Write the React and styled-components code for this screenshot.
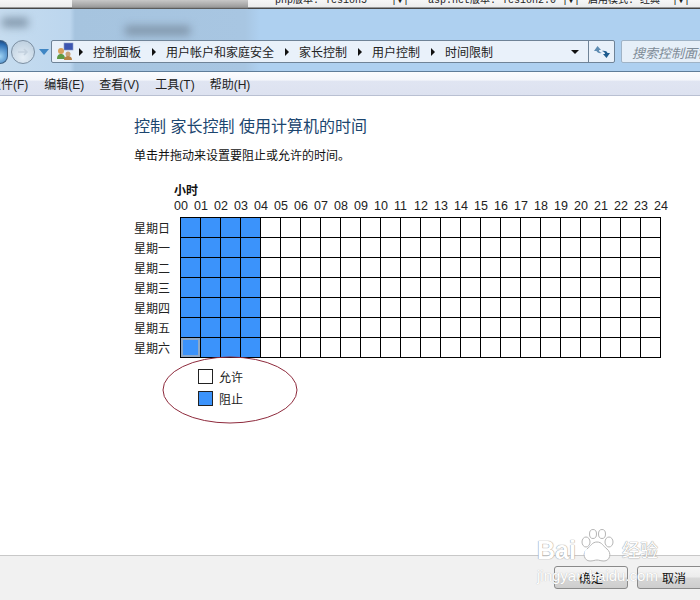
import React from 'react';
import styled, { createGlobalStyle } from 'styled-components';

const GlobalStyle = createGlobalStyle`
  html, body { margin: 0; padding: 0; background: #fff; }
  body {
    width: 700px;
    height: 600px;
    overflow: hidden;
    font-family: "Liberation Sans", "Noto Sans CJK SC", sans-serif;
    font-size: 12px;
    color: #111;
  }
`;

const Page = styled.div`
  position: relative;
  width: 700px;
  height: 600px;
  display: flex;
  flex-direction: column;
  overflow: hidden;
`;

const TaskStrip = styled.div`
  height: 9px;
  flex: none;
  display: flex;
  background: linear-gradient(#f6f6f6, #ececec 75%, #555 90%, #333);
  overflow: hidden;
`;

const TaskDim = styled.div`
  margin-left: 72px;
  width: 176px;
  flex: none;
  background: linear-gradient(#c8c8c8, #9a9a9a 80%, #444);
`;

const TaskText = styled.div`
  margin-left: ${p => p.$gap}px;
  width: ${p => p.$w}px;
  flex: none;
  font-family: "Liberation Mono", "Noto Sans CJK SC", monospace;
  font-size: 10px;
  line-height: 12px;
  margin-top: -5px;
  white-space: pre;
  color: #222;
`;

const Chrome = styled.div`
  height: 63px;
  flex: none;
  position: relative;
  display: flex;
  flex-direction: column;
  justify-content: flex-end;
  padding-bottom: 8px;
  box-sizing: border-box;
  border-bottom: 1px solid #5f7d99;
  background: linear-gradient(90deg, #c6dcef 0, #bcd6ee 70px, #a6c4df 75px, #a8c6e2 245px, #aed0f0 260px, #aed0f0 100%);
  overflow: hidden;
`;

const BlurTitle = styled.div`
  position: absolute;
  left: ${p => p.$left}px;
  top: ${p => p.$top}px;
  width: ${p => p.$w}px;
  height: 9px;
  background: #7f94a8;
  filter: blur(4px);
`;

const NavRow = styled.div`
  display: flex;
  align-items: center;
  height: 23px;
`;

const BackButton = styled.div`
  width: 8px;
  height: 24px;
  flex: none;
  border-radius: 0 12px 12px 0;
  background: radial-gradient(circle at 0 70%, #9fd4f5, #2d6fb5 70%, #173f74);
  border: 1px solid #3c5f82;
  border-left: none;
  box-sizing: border-box;
`;

const ForwardButton = styled.div`
  width: 24px;
  height: 24px;
  margin-left: 3px;
  flex: none;
  border-radius: 50%;
  border: 1px solid #7c8fa2;
  box-sizing: border-box;
  background: radial-gradient(circle at 50% 75%, #e5eef6, #c2d3e2 75%);
  display: flex;
  align-items: center;
  justify-content: center;
`;

const HistoryDrop = styled.div`
  width: 0;
  height: 0;
  margin-left: 4px;
  flex: none;
  border-left: 5px solid transparent;
  border-right: 5px solid transparent;
  border-top: 6px solid #3f86c4;
`;

const AddressBar = styled.div`
  width: 564px;
  height: 23px;
  margin-left: 2px;
  flex: none;
  display: flex;
  align-items: center;
  box-sizing: border-box;
  border: 1px solid #6f8397;
  border-radius: 2px;
  background: #e9f1fa;
`;

const Crumbs = styled.div`
  flex: 1;
  display: flex;
  align-items: center;
  padding-left: 3px;
  font-size: 12px;
  color: #222;
`;

const Crumb = styled.span`
  margin-left: 10px;
  white-space: nowrap;
`;

const Arrow = styled.i`
  display: block;
  width: 0;
  height: 0;
  margin-left: ${p => p.$gap}px;
  border-top: 4px solid transparent;
  border-bottom: 4px solid transparent;
  border-left: 4px solid #111;
`;

const AddressDrop = styled.div`
  width: 0;
  height: 0;
  margin-right: 9px;
  border-left: 4px solid transparent;
  border-right: 4px solid transparent;
  border-top: 4px solid #111;
`;

const Refresh = styled.div`
  width: 25px;
  height: 21px;
  flex: none;
  display: flex;
  align-items: center;
  justify-content: center;
  border-left: 1px solid #6f8397;
`;

const SearchBox = styled.div`
  margin-left: 6px;
  width: 100px;
  height: 23px;
  flex: none;
  box-sizing: border-box;
  border: 1px solid #9fb3c6;
  border-radius: 2px;
  background: #e6eff8;
  padding: 2px 0 0 10px;
  font-style: italic;
  font-size: 13px;
  color: #7d8a96;
  white-space: nowrap;
  overflow: hidden;
`;

const MenuBar = styled.div`
  height: 24px;
  flex: none;
  box-sizing: border-box;
  display: flex;
  align-items: center;
  border-bottom: 1px solid #b9c0d2;
  background: linear-gradient(#fbfcfe 0, #f4f6fb 35%, #e0e5f2 40%, #dde2f0 100%);
  overflow: hidden;
`;

const MenuItem = styled.span`
  flex: none;
  margin-left: ${p => p.$gap}px;
  font-size: 12px;
  color: #222;
  white-space: nowrap;
`;

const Content = styled.main`
  flex: 1;
  display: flex;
  flex-direction: column;
  padding: 21px 0 0 134px;
`;

const Heading = styled.h1`
  margin: 0;
  font-size: 16px;
  line-height: 20px;
  font-weight: 400;
  color: #1c466f;
  white-space: nowrap;
`;

const Hint = styled.p`
  margin: 11px 0 0;
  font-size: 12px;
  line-height: 16px;
  color: #111;
`;

const HourTitle = styled.div`
  margin: 20px 0 0 40px;
  font-size: 12px;
  line-height: 14px;
  font-weight: 700;
  color: #111;
`;

const HourLabels = styled.div`
  display: flex;
  margin: 1px 0 3px 46px;
  height: 15px;
`;

const HourLabel = styled.span`
  flex: none;
  width: 20px;
  margin-left: ${p => (p.$first ? -6 : 0)}px;
  font-size: 12.5px;
  line-height: 15px;
  color: #222;
  text-align: left;
`;

const ScheduleRow = styled.div`
  display: flex;
  align-items: center;
  height: 20px;
`;

const DayLabel = styled.span`
  width: 46px;
  flex: none;
  font-size: 12px;
  color: #222;
`;

const Cell = styled.div`
  flex: none;
  box-sizing: border-box;
  width: 20px;
  height: 20px;
  border-left: 1px solid #000;
  border-top: 1px solid #000;
  background: ${p => (p.$blocked ? '#3b93fb' : '#fff')};
  ${p => p.$last && 'border-bottom: 1px solid #000; height: 21px; align-self: flex-start;'}
  ${p => p.$focus && 'box-shadow: inset 0 0 0 2px #8fa9c6;'}
`;

const RowEnd = styled.div`
  width: 1px;
  height: ${p => (p.$last ? 21 : 20)}px;
  flex: none;
  align-self: flex-start;
  background: #000;
`;

const Legend = styled.div`
  position: relative;
  display: flex;
  flex-direction: column;
  gap: 7px;
  margin: 12px 0 0 64px;
`;

const LegendRow = styled.div`
  display: flex;
  align-items: center;
  gap: 6px;
  height: 15px;
`;

const Swatch = styled.span`
  width: 15px;
  height: 15px;
  box-sizing: border-box;
  border: 1px solid #222;
  background: ${p => (p.$blocked ? '#3b93fb' : '#fff')};
`;

const LegendText = styled.span`
  font-size: 12px;
  color: #222;
`;

const Ring = styled.svg`
  position: absolute;
  left: -36px;
  top: -13px;
  pointer-events: none;
`;

const Footer = styled.footer`
  height: 45px;
  flex: none;
  box-sizing: border-box;
  display: flex;
  justify-content: flex-end;
  gap: 9px;
  padding: 10px 0 0;
  border-top: 1px solid #c8c8c8;
  background: #f1f1f1;
`;

const DialogButton = styled.button`
  flex: none;
  width: 74px;
  height: 23px;
  padding: 0;
  font-family: inherit;
  font-size: 12px;
  color: #111;
  border: 1px solid #8a8a8a;
  border-radius: 3px;
  background: linear-gradient(#f5f5f5, #ececec 48%, #d8d8d8 52%, #cdcdcd);
  margin-right: ${p => (p.$trim ? -11 : 0)}px;
`;

const Watermark = styled.div`
  position: absolute;
  left: 537px;
  top: 529px;
  width: 126px;
  pointer-events: none;
`;

const WatermarkBrand = styled.div`
  display: flex;
  align-items: flex-end;
  height: 34px;
  font-size: 25px;
  line-height: 26px;
  font-weight: 700;
  color: #fff;
  text-shadow: 0 0 1px #999, 0 0 1px #999;
  white-space: nowrap;
`;

const PawBadge = styled.div`
  position: relative;
  width: 40px;
  height: 34px;
  flex: none;
  margin: 0 5px 0 1px;
`;

const PawText = styled.span`
  position: absolute;
  left: 7px;
  bottom: 3px;
  font-size: 15px;
  line-height: 16px;
  color: #fff;
  text-shadow: none;
`;

const WatermarkCjk = styled.span`
  font-size: 18px;
  line-height: 24px;
  font-weight: 400;
`;

const WatermarkUrl = styled.div`
  margin-top: 4px;
  font-size: 15px;
  line-height: 18px;
  white-space: nowrap;
  color: #fff;
  text-shadow: 0 0 1px #aaa;
`;

const crumbs = ['控制面板', '用户帐户和家庭安全', '家长控制', '用户控制', '时间限制'];
const menus = [
  ['文件(F)', -11],
  ['编辑(E)', 16],
  ['查看(V)', 15],
  ['工具(T)', 16],
  ['帮助(H)', 15],
];
const days = ['星期日', '星期一', '星期二', '星期三', '星期四', '星期五', '星期六'];
const hours = Array.from({ length: 25 }, (_, i) => String(i).padStart(2, '0'));

export default function App() {
  return (
    <Page>
      <GlobalStyle />
      <TaskStrip>
        <TaskDim />
        <TaskText $gap={27} $w={153}>pnp版本: Yesion5    |▼|</TaskText>
        <TaskText $gap={0} $w={160}>asp.net版本: Yesion2.0 |▼|</TaskText>
        <TaskText $gap={0} $w={110}>启用模式: 经典  |▼|</TaskText>
      </TaskStrip>

      <Chrome>
        <BlurTitle $left={2} $top={9} $w={26} />
        <BlurTitle $left={125} $top={17} $w={65} />
        <NavRow>
          <BackButton />
          <ForwardButton>
            <svg width="12" height="10" viewBox="0 0 12 10">
              <path d="M1 5h9M7 2l3 3-3 3" fill="none" stroke="#c3d1de" strokeWidth="1.6" />
            </svg>
          </ForwardButton>
          <HistoryDrop />
          <AddressBar>
            <Crumbs>
              <svg width="20" height="19" viewBox="0 0 20 19">
                <rect x="9" y="1" width="9" height="7" fill="#3b55b0" stroke="#8a9bc8" strokeWidth=".6" />
                <circle cx="6" cy="9" r="3" fill="#d8a05c" />
                <path d="M2 17c0-4 2-5 4-5s4 1 4 5z" fill="#5e9a44" />
                <circle cx="13" cy="12" r="2.5" fill="#c9a37a" />
                <path d="M9 18c0-3 2-4 4-4s4 1 4 4z" fill="#b78344" />
              </svg>
              {crumbs.map((label, i) => (
                <React.Fragment key={label}>
                  <Arrow $gap={i === 0 ? 4 : 11} />
                  <Crumb>{label}</Crumb>
                </React.Fragment>
              ))}
            </Crumbs>
            <AddressDrop />
            <Refresh>
              <svg width="16" height="14" viewBox="0 0 16 14">
                <path d="M0 6l3.5-5L7 5H5c0 1.500 1 2.500 3 3-3 .5-5-.5-5.500-2z" fill="#5f8db3" />
                <path d="M16 8l-3.500 5L9 9h2c0-1.500-1-2.500-3-3 3-.5 5 .5 5.500 2z" fill="#1f5c8e" />
              </svg>
            </Refresh>
          </AddressBar>
          <SearchBox>搜索控制面板</SearchBox>
        </NavRow>
      </Chrome>

      <MenuBar>
        {menus.map(([label, gap]) => (
          <MenuItem key={label} $gap={gap}>{label}</MenuItem>
        ))}
      </MenuBar>

      <Content>
        <Heading>控制 家长控制 使用计算机的时间</Heading>
        <Hint>单击并拖动来设置要阻止或允许的时间。</Hint>
        <HourTitle>小时</HourTitle>
        <HourLabels>
          {hours.map((h, i) => (
            <HourLabel key={h} $first={i === 0}>{h}</HourLabel>
          ))}
        </HourLabels>
        {days.map((day, d) => (
          <ScheduleRow key={day}>
            <DayLabel>{day}</DayLabel>
            {hours.slice(0, 24).map((h, i) => (
              <Cell
                key={h}
                $blocked={i < 4}
                $last={d === 6}
                $focus={d === 6 && i === 0}
              />
            ))}
            <RowEnd $last={d === 6} />
          </ScheduleRow>
        ))}
        <Legend>
          <Ring width="136" height="68" viewBox="0 0 136 68">
            <ellipse cx="68" cy="34" rx="67" ry="33" fill="none" stroke="#8e2a3c" strokeWidth="1" />
          </Ring>
          <LegendRow>
            <Swatch />
            <LegendText>允许</LegendText>
          </LegendRow>
          <LegendRow>
            <Swatch $blocked />
            <LegendText>阻止</LegendText>
          </LegendRow>
        </Legend>
      </Content>

      <Footer>
        <DialogButton>确定</DialogButton>
        <DialogButton $trim>取消</DialogButton>
      </Footer>

      <Watermark>
        <WatermarkBrand>
          Bai
          <PawBadge>
            <svg width="40" height="34" viewBox="0 0 40 34">
              <g fill="#fff" stroke="#b5b5b5" strokeWidth="1">
                <ellipse cx="9" cy="13" rx="4" ry="5" />
                <ellipse cx="16" cy="5" rx="3.5" ry="4.5" />
                <ellipse cx="25" cy="5" rx="3.5" ry="4.5" />
                <ellipse cx="32" cy="13" rx="4" ry="5" />
                <path d="M20 13c-5 0-6 4-10 7-5 4-3 12 3 12 3 0 5-1 7-1s4 1 7 1c6 0 8-8 3-12-4-3-5-7-10-7z" />
              </g>
            </svg>
            <PawText>du</PawText>
          </PawBadge>
          <WatermarkCjk>经验</WatermarkCjk>
        </WatermarkBrand>
        <WatermarkUrl>jingyan.baidu.com</WatermarkUrl>
      </Watermark>
    </Page>
  );
}
